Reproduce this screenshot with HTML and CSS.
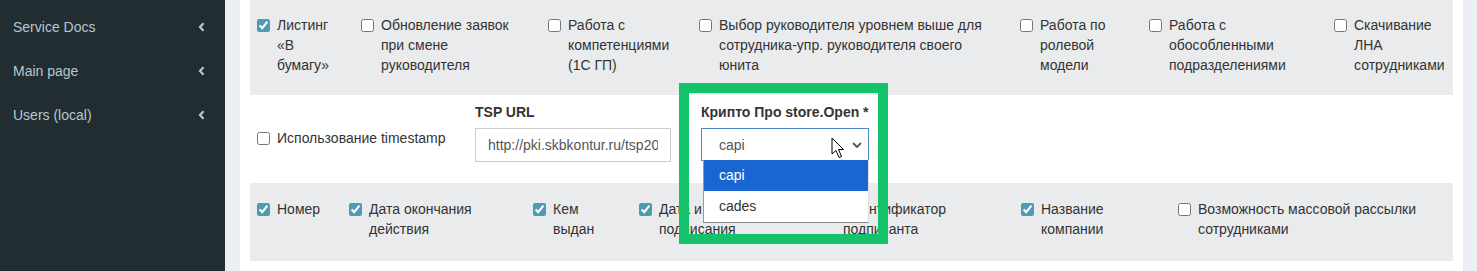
FILE: index.html
```html
<!DOCTYPE html>
<html lang="ru">

<head>
    <meta charset="UTF-8">
    <meta name="viewport" content="width=device-width, initial-scale=1.0">
    <title>Settings</title>
    <link rel="stylesheet" href="styles.css">
</head>

<body>
    <div class="layout">
        <aside class="sidebar">
            <ul class="menu">
                <li>Service Docs
                    <svg class="angle" width="7" height="10" viewBox="0 0 7 10"><polyline points="5.5,1.3 2,5 5.5,8.7" /></svg>
                </li>
                <li>Main page
                    <svg class="angle" width="7" height="10" viewBox="0 0 7 10"><polyline points="5.5,1.3 2,5 5.5,8.7" /></svg>
                </li>
                <li>Users (local)
                    <svg class="angle" width="7" height="10" viewBox="0 0 7 10"><polyline points="5.5,1.3 2,5 5.5,8.7" /></svg>
                </li>
            </ul>
        </aside>

        <main class="content">
            <div class="panel">
                <div class="row row-gray opts opts-top">
                    <label class="opt"><input type="checkbox" checked><span>Листинг «В бумагу»</span></label>
                    <label class="opt"><input type="checkbox"><span>Обновление заявок при смене руководителя</span></label>
                    <label class="opt"><input type="checkbox"><span>Работа с компетенциями (1С ГП)</span></label>
                    <label class="opt"><input type="checkbox"><span>Выбор руководителя уровнем выше для сотрудника-упр. руководителя своего юнита</span></label>
                    <label class="opt"><input type="checkbox"><span>Работа по ролевой модели</span></label>
                    <label class="opt"><input type="checkbox"><span>Работа с обособленными подразделениями</span></label>
                    <label class="opt"><input type="checkbox"><span>Скачивание ЛНА сотрудниками</span></label>
                </div>

                <div class="row form-row">
                    <label class="opt opt-inline"><input type="checkbox"><span>Использование timestamp</span></label>
                    <div class="field">
                        <label class="field-label" for="tsp">TSP URL</label>
                        <input class="form-control" id="tsp" type="text" value="http://pki.skbkontur.ru/tsp2012/tsp.srf">
                    </div>
                    <div class="field field-select">
                        <div class="highlight"></div>
                        <label class="field-label">Крипто Про store.Open *</label>
                        <div class="select-box">
                            <span>capi</span>
                            <svg class="caret" width="10" height="6" viewBox="0 0 10 6"><polyline points="1,1 5,5 9,1" /></svg>
                            <ul class="select-list">
                                <li class="active">capi</li>
                                <li>cades</li>
                            </ul>
                            <svg class="cursor" width="14" height="22" viewBox="0 0 14 22">
                                <path d="M1 1 L1 17 L5 13.5 L8 20.5 L10.5 19.5 L7.5 12.5 L12.5 12.5 Z" />
                            </svg>
                        </div>
                    </div>
                </div>

                <div class="row row-gray opts opts-bottom">
                    <label class="opt"><input type="checkbox" checked><span>Номер</span></label>
                    <label class="opt"><input type="checkbox" checked><span>Дата окончания действия</span></label>
                    <label class="opt"><input type="checkbox" checked><span>Кем выдан</span></label>
                    <label class="opt"><input type="checkbox" checked><span>Дата и время подписания</span></label>
                    <label class="opt"><input type="checkbox" checked><span>Идентификатор подписанта</span></label>
                    <label class="opt"><input type="checkbox" checked><span>Название компании</span></label>
                    <label class="opt"><input type="checkbox"><span>Возможность массовой рассылки сотрудниками</span></label>
                </div>
            </div>
        </main>
    </div>
</body>

</html>
```

FILE: styles.css
```css
body {
    margin: 0;
    font-family: "Liberation Sans", Arial, sans-serif;
    font-size: 14px;
    line-height: 20px;
    color: #333;
    background-color: #ecf0f5;
}

.layout {
    display: flex;
    height: 271px;
    overflow: hidden;
}

/* sidebar */
.sidebar {
    width: 225px;
    flex-shrink: 0;
    background-color: #222d32;
    padding-top: 5px;
}

.menu {
    list-style: none;
    margin: 0;
    padding: 0;
}

.menu li {
    display: flex;
    justify-content: space-between;
    align-items: center;
    padding: 12px 20px 12px 13px;
    color: #b8c7ce;
}

.angle polyline {
    fill: none;
    stroke: #b8c7ce;
    stroke-width: 2.2;
}

/* content */
.content {
    flex: 1;
    padding: 0 14px 0 15px;
}

.panel {
    background-color: #fff;
    padding: 0 10px 10px;
}

.row-gray {
    background-color: #eaebed;
}

.opts {
    display: grid;
    padding: 15px 0 20px 7px;
}

.opts-top {
    grid-template-columns: 104px 187px 151px 321px 129px 185px 1fr;
}

.opts-bottom {
    grid-template-columns: 92px 184px 106px 184px 198px 157px 1fr;
    padding: 16px 0 22px 7px;
}

.opt {
    display: flex;
    align-items: flex-start;
    padding-right: 26px;
}

.opt:last-child {
    padding-right: 4px;
}

.opt input {
    width: 13px;
    height: 13px;
    margin: 4px 7px 0 0;
    flex-shrink: 0;
    accent-color: #4b9cae;
}

/* form row */
.form-row {
    display: grid;
    grid-template-columns: 218px 226px 1fr;
    padding: 7px 0 21px 7px;
}

.opt-inline {
    padding-top: 26px;
}

.field-label {
    display: block;
    font-weight: bold;
    margin-bottom: 6px;
}

.form-control {
    box-sizing: border-box;
    width: 196px;
    height: 34px;
    padding: 6px 12px;
    border: 1px solid #ccc;
    border-radius: 0;
    font: inherit;
    color: #555;
    outline: none;
}

.field-select {
    position: relative;
}

.highlight {
    position: absolute;
    left: -22px;
    top: -19px;
    width: 209px;
    height: 161px;
    box-sizing: border-box;
    border: 10px solid #13c26b;
    pointer-events: none;
}

.select-box {
    position: relative;
    box-sizing: border-box;
    width: 168px;
    height: 33px;
    margin-top: 1px;
    padding: 0 6px 0 17px;
    border: 1px solid #4d88c4;
    display: flex;
    align-items: center;
    justify-content: space-between;
    color: #555;
    background-color: #fff;
}

.caret polyline {
    fill: none;
    stroke: #555;
    stroke-width: 1.8;
}

.select-list {
    position: absolute;
    top: 100%;
    left: 1px;
    width: 166px;
    box-sizing: border-box;
    list-style: none;
    margin: 0;
    padding: 0;
    background-color: #fff;
    border-left: 1px solid #9a9a9a;
    border-right: 1px solid #e0e0e0;
    border-bottom: 1px solid #8a8a8a;
}

.select-list li {
    height: 31px;
    line-height: 31px;
    padding-left: 15px;
    color: #333;
}

.select-list li.active {
    background-color: #1a66d1;
    color: #fff;
}

.cursor {
    position: absolute;
    left: 129px;
    top: 8px;
}

.cursor path {
    fill: #fff;
    stroke: #000;
    stroke-width: 1;
}
```
